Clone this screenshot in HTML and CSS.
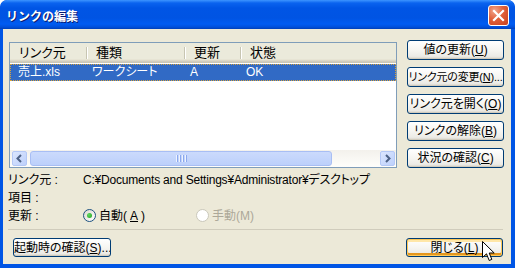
FILE: index.html
```html
<!DOCTYPE html>
<html lang="ja">
<head>
  <meta charset="UTF-8" />
  <title>リンクの編集</title>
  <link rel="stylesheet" href="styles.css">
</head>
<body>
  <div class="window">
    <!-- タイトルバー -->
    <div class="titlebar">
      <span class="title">リンクの編集</span>
      <button class="close-btn">
        <svg width="13" height="13" viewBox="0 0 13 13">
          <path d="M2 2 L11 11 M11 2 L2 11" stroke="#fff" stroke-width="2.2" stroke-linecap="square" />
        </svg>
      </button>
    </div>

    <!-- クライアント領域 -->
    <div class="client">
      <div class="top-area">
        <!-- リストビュー -->
        <div class="listview">
          <div class="lv-header">
            <div class="lv-col c1">リンク元</div>
            <div class="lv-col c2">種類</div>
            <div class="lv-col c3">更新</div>
            <div class="lv-col c4">状態</div>
          </div>
          <div class="lv-body">
            <div class="lv-row selected">
              <div class="lv-cell c1">売上.xls</div>
              <div class="lv-cell c2">ワークシート</div>
              <div class="lv-cell c3">A</div>
              <div class="lv-cell c4">OK</div>
            </div>
          </div>
          <div class="hscroll">
            <div class="sb-arrow">
              <svg width="7" height="9" viewBox="0 0 7 9"><path d="M5 1 L1.5 4.5 L5 8" fill="none" stroke="#4d6185" stroke-width="2" /></svg>
            </div>
            <div class="sb-track">
              <div class="sb-thumb">
                <span class="grip"></span><span class="grip"></span><span class="grip"></span><span class="grip"></span>
              </div>
            </div>
            <div class="sb-arrow">
              <svg width="7" height="9" viewBox="0 0 7 9"><path d="M2 1 L5.5 4.5 L2 8" fill="none" stroke="#4d6185" stroke-width="2" /></svg>
            </div>
          </div>
        </div>

        <!-- 右側のボタン -->
        <div class="side-buttons">
          <button class="xp-btn">値の更新(<u>U</u>)</button>
          <button class="xp-btn tight">リンク元の変更(<u>N</u>)...</button>
          <button class="xp-btn">リンク元を開く(<u>O</u>)</button>
          <button class="xp-btn">リンクの解除(<u>B</u>)</button>
          <button class="xp-btn">状況の確認(<u>C</u>)</button>
        </div>
      </div>

      <!-- 詳細情報 -->
      <div class="info">
        <div class="info-label">リンク元 :</div>
        <div class="info-value path">C:¥Documents and Settings¥Administrator¥デスクトップ</div>
        <div class="info-label">項目 :</div>
        <div class="info-value"></div>
        <div class="info-label">更新 :</div>
        <div class="info-value radios">
          <label class="radio"><span class="radio-dot checked"></span>自動(<u>A</u>)</label>
          <label class="radio disabled"><span class="radio-dot"></span>手動(M)</label>
        </div>
      </div>

      <!-- 下部 -->
      <div class="bottom-bar">
        <button class="xp-btn wide">起動時の確認(<u>S</u>)...</button>
        <button class="xp-btn hot">閉じる(<u>L</u>)</button>
      </div>
    </div>

    <!-- マウスカーソル -->
    <svg class="cursor" width="13" height="21" viewBox="0 0 13 21">
      <path d="M0.5 0.5 L0.5 16.5 L4.5 12.8 L7.2 19.5 L9.8 18.4 L7.2 12 L12.2 12 Z" fill="#fff" stroke="#000" stroke-width="1" stroke-linejoin="miter" />
    </svg>
  </div>
</body>
</html>
```

FILE: styles.css
```css
/* ─── 全体 ─── */
body {
  margin: 0;
  padding: 0;
  font-family: "Liberation Sans", "Noto Sans CJK JP", sans-serif;
  font-size: 12px;
  font-feature-settings: "palt";
  background: #ffffff;
}

/* ウィンドウ枠 (XP Luna) */
.window {
  position: relative;
  width: 515px;
  height: 268px;
  box-sizing: border-box;
  display: flex;
  flex-direction: column;
  background: #0055e5;
  border-radius: 7px 7px 0 0;
  padding: 0 4px 4px 3px;
  overflow: hidden;
}

/* タイトルバー */
.titlebar {
  height: 29px;
  margin: 0 -4px 0 -3px;
  padding: 0 6px 0 6px;
  display: flex;
  align-items: center;
  justify-content: space-between;
  background: linear-gradient(to bottom, #3d95ff 0, #0a63ef 3px, #0055e5 8px, #0054e3 18px, #005cf2 24px, #0050dc 27px, #003fb8 29px);
  border-radius: 7px 7px 0 0;
}
.title {
  color: #ffffff;
  font-weight: bold;
  font-size: 12px;
  font-feature-settings: normal;
  text-shadow: 1px 1px 0 #0a1a6e;
  margin-top: 1px;
}
.close-btn {
  width: 21px;
  height: 21px;
  margin-top: 1px;
  padding: 0;
  border: 1px solid #ffffff;
  border-radius: 3px;
  background: radial-gradient(circle at 30% 25%, #f2a58c 0, #e0603a 45%, #c8401c 100%);
  display: flex;
  align-items: center;
  justify-content: center;
}

/* クライアント領域 */
.client {
  flex: 1;
  display: flex;
  flex-direction: column;
  background: #ece9d8;
  padding: 11px 7px 7px 6px;
  color: #000000;
}

.top-area {
  display: flex;
  gap: 10px;
}

/* リストビュー */
.listview {
  width: 388px;
  height: 126px;
  margin-top: 2px;
  box-sizing: border-box;
  border: 1px solid #7f9db9;
  background: #ffffff;
  display: flex;
  flex-direction: column;
}
.lv-header {
  display: grid;
  grid-template-columns: 77px 98px 56px 1fr;
  height: 20px;
  background: linear-gradient(to bottom, #ebeadb 0, #ebeadb 16px, #e2decd 17px, #d6d2c2 18px, #cbc7b8 19px);
}
.lv-col {
  position: relative;
  line-height: 19px;
  padding-left: 9px;
  font-size: 13px;
}
.lv-col + .lv-col::before {
  content: "";
  position: absolute;
  left: -1px;
  top: 4px;
  height: 12px;
  border-left: 1px solid #c7c5b2;
  border-right: 1px solid #ffffff;
}
.lv-body {
  flex: 1;
  padding-top: 1px;
}
.lv-row {
  display: grid;
  grid-template-columns: 77px 98px 56px 1fr;
  height: 17px;
  line-height: 15px;
  box-sizing: border-box;
}
.lv-row.selected {
  background: #316ac5;
  color: #ffffff;
  border: 1px dotted #d9a33c;
}
.lv-cell {
  padding-left: 4px;
}
.lv-row .c1 {
  padding-left: 7px;
}

/* 水平スクロールバー */
.hscroll {
  display: flex;
  height: 17px;
  background: linear-gradient(to bottom, #f3f1ec, #fefefb);
  padding: 1px;
  box-sizing: border-box;
}
.sb-arrow {
  width: 15px;
  height: 15px;
  box-sizing: border-box;
  border: 1px solid #b4c8f6;
  border-radius: 2px;
  background: linear-gradient(to bottom right, #dbe6fe, #bdd0fb);
  display: flex;
  align-items: center;
  justify-content: center;
  margin-left: 1px;
}
.sb-track {
  flex: 1;
  padding: 0 1px;
}
.sb-thumb {
  width: 302px;
  height: 15px;
  box-sizing: border-box;
  border: 1px solid #a8bef4;
  border-radius: 3px;
  background: linear-gradient(to bottom, #cbdafc, #bcd0fb);
  display: flex;
  align-items: center;
  justify-content: center;
  gap: 1px;
  margin-left: 2px;
}
.grip {
  width: 1px;
  height: 7px;
  background: #eef3fe;
  box-shadow: 1px 0 0 #8ca9ee;
  margin-right: 1px;
}

/* 右側ボタン */
.side-buttons {
  width: 97px;
  display: flex;
  flex-direction: column;
  gap: 7px;
}

/* XP スタイルのボタン */
.xp-btn {
  height: 20px;
  padding: 0;
  font-family: "Liberation Sans", "Noto Sans CJK JP", sans-serif;
  font-size: 12px;
  font-feature-settings: "palt";
  line-height: 16px;
  color: #000000;
  white-space: nowrap;
  border: 1px solid #003c74;
  border-radius: 3px;
  background: linear-gradient(to bottom, #ffffff 0, #f6f5f1 50%, #ecebe6 85%, #d6d0c5 100%);
  box-shadow: inset 0 -1px 0 #d0cbbd;
  overflow: hidden;
}
.xp-btn.tight {
  font-size: 11px;
  letter-spacing: -0.2px;
}
.xp-btn u {
  text-underline-offset: 1px;
}

/* 詳細情報 */
.info {
  display: grid;
  grid-template-columns: 75px 1fr;
  grid-template-rows: 18px 18px 17px;
  margin-top: 3px;
  margin-left: -1px;
  align-items: center;
}
.info-label,
.info-value {
  line-height: 16px;
}
.path {
  letter-spacing: -0.2px;
}
.radios {
  display: flex;
}
.radio {
  display: flex;
  align-items: center;
  gap: 3px;
  width: 113px;
}
.radio.disabled {
  color: #aca899;
}
.radio-dot {
  width: 13px;
  height: 13px;
  box-sizing: border-box;
  border: 1px solid #1c5180;
  border-radius: 50%;
  background: linear-gradient(to bottom right, #dcd9d0, #ffffff);
  display: flex;
  align-items: center;
  justify-content: center;
}
.radio-dot.checked::after {
  content: "";
  width: 5px;
  height: 5px;
  border-radius: 50%;
  background: radial-gradient(circle at 35% 35%, #5fd85f, #21a121);
}
.radio.disabled .radio-dot {
  border-color: #cac8bb;
  background: #ffffff;
}

/* 下部ボタン */
.bottom-bar {
  margin-top: auto;
  margin-left: -1px;
  margin-right: 1px;
  border-top: 1px solid #d0ccbc;
  padding: 8px 0 0 5px;
  display: flex;
  justify-content: space-between;
}
.bottom-bar .xp-btn {
  width: 97px;
  height: 19px;
}
.bottom-bar .xp-btn.wide {
  width: 98px;
}
.xp-btn.hot {
  box-shadow: inset 0 0 0 1px #fcc85a, inset 0 2px 0 1px #ffe7a8, inset 0 -2px 0 1px #e5971f;
}

/* マウスカーソル */
.cursor {
  position: absolute;
  left: 482px;
  top: 241px;
}
```
